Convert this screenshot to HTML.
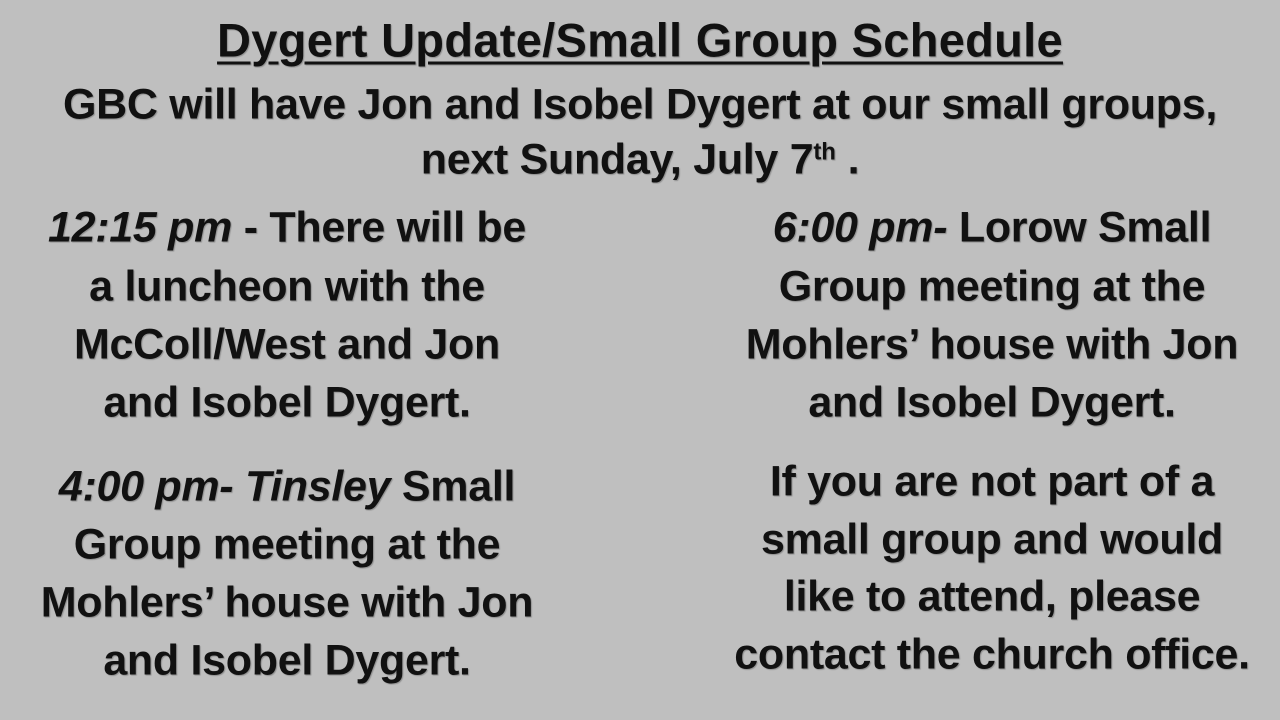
<!DOCTYPE html>
<html><head><meta charset="utf-8"><style>
html,body{margin:0;padding:0}
body{width:1280px;height:720px;background:#bfbfbf;position:relative;overflow:hidden;font-family:"Liberation Sans",sans-serif;font-weight:bold;color:#111;}
.l{position:absolute;white-space:nowrap;text-align:center;font-size:43px;letter-spacing:-0.3px;line-height:1;transform:translate(-50%,-50%);text-shadow:1px 1px 1px rgba(0,0,0,.25)}
i{font-style:italic}
sup{font-size:24px;vertical-align:14px;letter-spacing:0}
</style></head><body>
<div class="l" style="left:640px;top:40px;font-size:47px;letter-spacing:0.3px;text-decoration:underline;text-decoration-thickness:3px;text-underline-offset:5px">Dygert Update/Small Group Schedule</div>
<div class="l" style="left:640px;top:105px">GBC will have Jon and Isobel Dygert at our small groups,</div>
<div class="l" style="left:640px;top:160px">next Sunday, July 7<sup>th</sup> .</div>

<div class="l" style="left:287px;top:228px"><i>12:15 pm</i> - There will be</div>
<div class="l" style="left:287px;top:287px">a luncheon with the</div>
<div class="l" style="left:287px;top:345px">McColl/West and Jon</div>
<div class="l" style="left:287px;top:403px">and Isobel Dygert.</div>

<div class="l" style="left:287px;top:487px"><i>4:00 pm- Tinsley</i> Small</div>
<div class="l" style="left:287px;top:545px">Group meeting at the</div>
<div class="l" style="left:287px;top:603px">Mohlers’ house with Jon</div>
<div class="l" style="left:287px;top:661px">and Isobel Dygert.</div>

<div class="l" style="left:992px;top:228px"><i>6:00 pm-</i> Lorow Small</div>
<div class="l" style="left:992px;top:287px">Group meeting at the</div>
<div class="l" style="left:992px;top:345px">Mohlers’ house with Jon</div>
<div class="l" style="left:992px;top:403px">and Isobel Dygert.</div>

<div class="l" style="left:992px;top:482px">If you are not part of a</div>
<div class="l" style="left:992px;top:540px">small group and would</div>
<div class="l" style="left:992px;top:597px">like to attend, please</div>
<div class="l" style="left:992px;top:655px">contact the church office.</div>
</body></html>
